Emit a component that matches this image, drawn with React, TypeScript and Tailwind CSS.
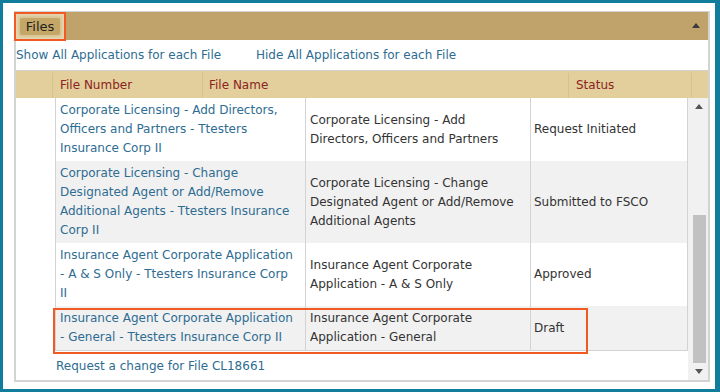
import React from 'react';

const files = [
  {
    number: 'Corporate Licensing - Add Directors, Officers and Partners - Ttesters Insurance Corp II',
    name: 'Corporate Licensing - Add Directors, Officers and Partners',
    status: 'Request Initiated',
  },
  {
    number: 'Corporate Licensing - Change Designated Agent or Add/Remove Additional Agents - Ttesters Insurance Corp II',
    name: 'Corporate Licensing - Change Designated Agent or Add/Remove Additional Agents',
    status: 'Submitted to FSCO',
  },
  {
    number: 'Insurance Agent Corporate Application - A & S Only - Ttesters Insurance Corp II',
    name: 'Insurance Agent Corporate Application - A & S Only',
    status: 'Approved',
  },
  {
    number: 'Insurance Agent Corporate Application - General - Ttesters Insurance Corp II',
    name: 'Insurance Agent Corporate Application - General',
    status: 'Draft',
  },
];

const Arrow: React.FC<{ down?: boolean; color?: string }> = ({ down, color = '#555' }) => (
  <svg width="8" height="5" viewBox="0 0 8 5" className={down ? 'rotate-180' : ''}>
    <path d="M0 5 L4 0 L8 5 Z" fill={color} />
  </svg>
);

const App: React.FC = () => {
  return (
    <div className="h-[392px] w-[720px] overflow-hidden border-t-[3px] border-l-[3px] border-b-[3px] border-r-[5px] border-[#0f7d9b] bg-white pt-[8px] pl-[11px] pr-[5px] font-['DejaVu_Sans',Verdana,sans-serif] text-[12px] leading-[19px] text-[#333]">
      {/* Panel header */}
      <div className="flex h-[29px] items-center border-t border-r-2 border-[#d3d3d3] bg-[#bfa36a]">
        <div className="flex h-[29px] w-[52px] items-center justify-center border-2 border-[#f15a22] bg-[#e3d5b0]">
          <span className="rounded-[2px] bg-[#c4a766] px-[6px] text-[13px] leading-[17px] text-[#222] shadow-[0_0_2px_2px_#d8c595]">
            Files
          </span>
        </div>
        <div className="flex-1" />
        <div className="mr-[8px] mt-[-1px]">
          <Arrow color="#3a3a3a" />
        </div>
      </div>

      {/* Show / hide links */}
      <div className="flex h-[30px] items-center border-x-2 border-[#d3d3d3] pt-[1px] text-[#2e6c92]">
        <span className="w-[240px]">Show All Applications for each File</span>
        <span>Hide All Applications for each File</span>
      </div>

      {/* Column header */}
      <div className="flex h-[28px] items-stretch border-x-2 border-t border-[#d3d3d3] bg-[#e2cf9b] pt-[2px] text-[#8c2323]">
        <div className="w-[37px] border-r border-[#d6c28c]" />
        <div className="flex w-[150px] items-center border-r border-[#d6c28c] pl-[7px]">File Number</div>
        <div className="flex w-[366px] items-center border-r border-[#d6c28c] pl-[6px]">File Name</div>
        <div className="flex w-[123px] items-center border-r border-[#d6c28c] pl-[7px]">Status</div>
        <div className="flex-1" />
      </div>

      {/* Body */}
      <div className="flex h-[284px] border-x-2 border-b-2 border-[#d3d3d3]">
        <div className="relative flex-1 overflow-hidden pl-[39px]">
          <table className="mt-[-1px] w-[633px] table-fixed border-collapse border border-[#d3d3d3]">
            <colgroup>
              <col className="w-[250px]" />
              <col className="w-[225px]" />
              <col />
            </colgroup>
            <tbody>
              {files.map((f, i) => (
                <tr key={f.number} className={i % 2 === 1 ? 'bg-[#f1f1f1]' : 'bg-white'}>
                  <td className="border-r border-[#d3d3d3] py-[3px] pl-[4px] pr-[10px] align-middle text-[#2e6c92]">
                    {f.number}
                  </td>
                  <td className="border-r border-[#d3d3d3] py-[3px] pl-[4px] pr-[6px] align-middle">{f.name}</td>
                  <td className="py-[3px] pl-[3px] align-middle">{f.status}</td>
                </tr>
              ))}
            </tbody>
          </table>
          <div className="mt-[6px] pl-[1px] text-[#2e6c92]">Request a change for File CL18661</div>

          {/* highlight of the draft row */}
          <div className="absolute left-[37px] top-[210px] h-[46px] w-[535px] border-2 border-[#f15a22]" />
        </div>

        {/* Scrollbar */}
        <div className="flex w-[20px] flex-col bg-[#f1f1f1]">
          <div className="flex h-[17px] items-center justify-center pl-[1px]">
            <Arrow />
          </div>
          <div className="flex flex-1 flex-col justify-end pl-[5px] pr-[2px]">
            <div className="h-[148px] bg-[#c1c1c1]" />
          </div>
          <div className="flex h-[17px] items-center justify-center pl-[1px]">
            <Arrow down />
          </div>
        </div>
      </div>
    </div>
  );
};

export default App;
